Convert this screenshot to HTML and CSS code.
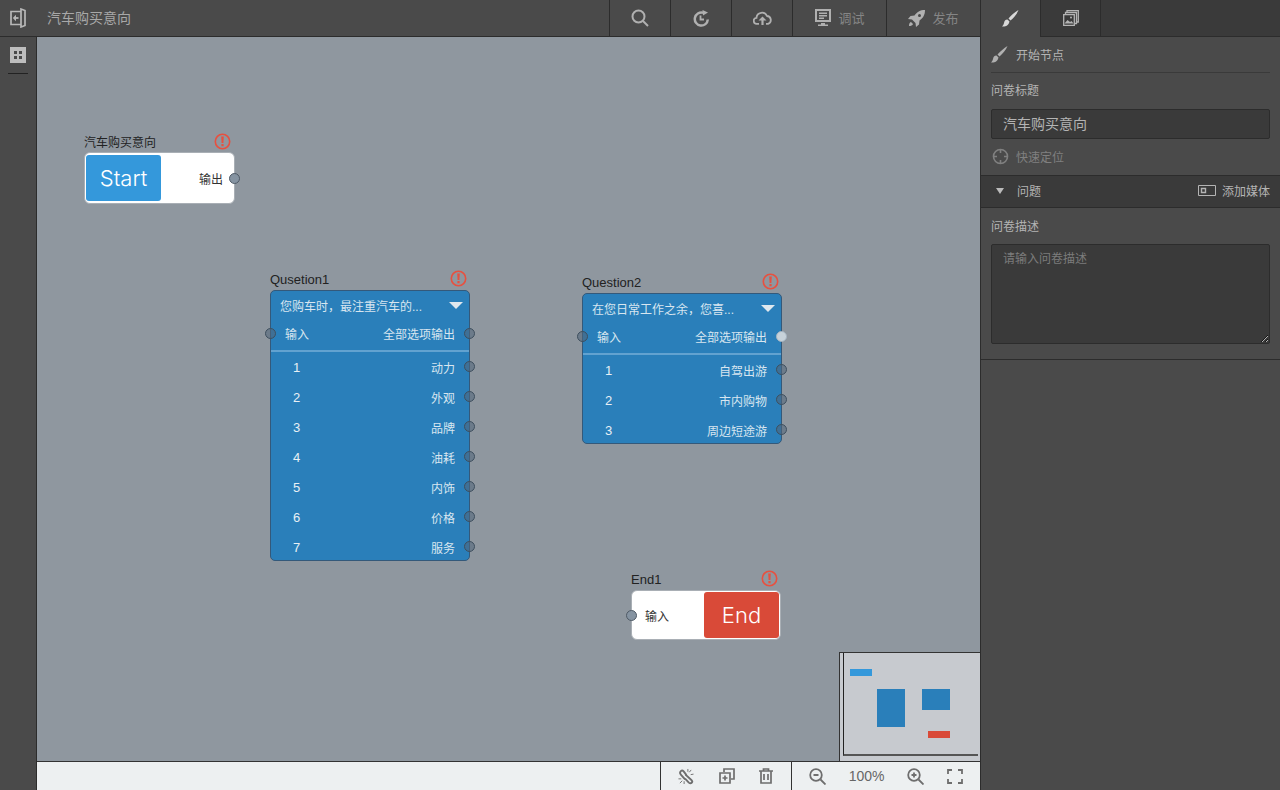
FILE: index.html
```html
<!DOCTYPE html>
<html lang="zh">
<head>
    <meta charset="UTF-8">
    <title>汽车购买意向</title>
    <link rel="stylesheet" href="styles.css">
</head>
<body>
<div class="app">
    <div class="main">
        <header class="topbar">
            <div class="back-btn">
                <svg width="16" height="20" viewBox="0 0 16 20" fill="none" stroke="#b8b8b8" stroke-width="1.700">
                    <path d="M11 3.500H1V16.500H11"/>
                    <path d="M11 1l4 1.500v15L11 19z" fill="#4a4a4a"/>
                    <path d="M8.500 10H4.500" stroke-width="1.800"/>
                    <path d="M6 6.800L2.800 10 6 13.200z" fill="#b8b8b8" stroke="none"/>
                </svg>
            </div>
            <div class="doc-title">汽车购买意向</div>
            <div class="tool">
                <svg width="18" height="18" viewBox="0 0 18 18" fill="none" stroke="#b0b0b0" stroke-width="2"><circle cx="7.500" cy="7.500" r="6"/><path d="M12 12l5 5"/></svg>
            </div>
            <div class="tool">
                <svg width="18" height="18" viewBox="0 0 18 18" fill="none" stroke="#b0b0b0" stroke-width="2.500"><path d="M15.800 10.500A6.500 6.500 0 1 1 11 3.800"/><path d="M8.500 6.500v4h3.500" stroke-width="1.800"/><path d="M10.500 1l5.500 2.500-5 3z" fill="#b0b0b0" stroke="none"/></svg>
            </div>
            <div class="tool">
                <svg width="19" height="14" viewBox="0 0 19 14" fill="none" stroke="#b0b0b0" stroke-width="1.800"><path d="M6 12.800H4a3 3 0 0 1-.5-6 5.500 5.500 0 0 1 10.500-1.800 4 4 0 0 1 1 7.800H13"/><path d="M9.500 14V9" stroke-width="2.200"/><path d="M9.500 5.500l4 4h-8z" fill="#b0b0b0" stroke="none"/></svg>
            </div>
            <div class="tool tool-wide tool-debug">
                <svg width="17" height="18" viewBox="-1 0 17 18"><path fill="#b0b0b0" fill-rule="evenodd" d="M0 0h16v13H0zM2 2v9h12V2zM4 3.500h8V5H4zM4 6h8v1.500H4zM4 8.500h5V10H4zM6 14h4v1.500h3V17H3v-1.500h3z"/></svg>
                <span>调试</span>
            </div>
            <div class="tool tool-wide tool-publish">
                <svg width="17" height="17" viewBox="0 0 17 17"><path fill="#b0b0b0" d="M17 0c-5 0-8 2-10.500 5.500L2.500 6 0 9l4 .5L7.500 13l.5 4 3-2.500.5-4C15 8 17 5 17 0zM11.500 4a1.500 1.500 0 1 1 0 3 1.500 1.500 0 0 1 0-3zM3 12c-1.500 .5-2 2-2 4 2 0 3.500-.5 4-2z"/></svg>
                <span>发布</span>
            </div>
        </header>

        <div class="work">
            <aside class="sidebar">
                <div class="grid-icon"><i></i><i></i><i></i><i></i></div>
                <div class="sidebar-line"></div>
            </aside>

            <div class="center">
                <div class="canvas">
                    <div class="node-wrap start-wrap">
                        <div class="node-head">
                            <span>汽车购买意向</span>
                            <svg class="warn" width="17" height="17" viewBox="0 0 17 17"><circle cx="8.500" cy="8.500" r="7.200" fill="none" stroke="#e8503f" stroke-width="1.600"/><path d="M7.200 3.500h2.600l-.4 6.500H7.600zM7.400 11h2.200v2.200H7.400z" fill="#e8503f"/></svg>
                        </div>
                        <div class="term-node start-node">
                            <div class="term-block start-block">Start</div>
                            <div class="term-label term-label-out">输出</div>
                            <span class="port port-right"></span>
                        </div>
                    </div>

                    <div class="node-wrap q1-wrap">
                        <div class="node-head">
                            <span>Qusetion1</span>
                            <svg class="warn" width="17" height="17" viewBox="0 0 17 17"><circle cx="8.500" cy="8.500" r="7.200" fill="none" stroke="#e8503f" stroke-width="1.600"/><path d="M7.200 3.500h2.600l-.4 6.500H7.600zM7.400 11h2.200v2.200H7.400z" fill="#e8503f"/></svg>
                        </div>
                        <div class="q-node">
                            <div class="q-title"><span>您购车时，最注重汽车的...</span><b class="caret"></b></div>
                            <div class="q-io">
                                <span class="port port-left"></span>
                                <span>输入</span><span>全部选项输出</span>
                                <span class="port port-right"></span>
                            </div>
                            <div class="q-row"><span class="num">1</span><span>动力</span><span class="port port-right"></span></div>
                            <div class="q-row"><span class="num">2</span><span>外观</span><span class="port port-right"></span></div>
                            <div class="q-row"><span class="num">3</span><span>品牌</span><span class="port port-right"></span></div>
                            <div class="q-row"><span class="num">4</span><span>油耗</span><span class="port port-right"></span></div>
                            <div class="q-row"><span class="num">5</span><span>内饰</span><span class="port port-right"></span></div>
                            <div class="q-row"><span class="num">6</span><span>价格</span><span class="port port-right"></span></div>
                            <div class="q-row"><span class="num">7</span><span>服务</span><span class="port port-right"></span></div>
                        </div>
                    </div>

                    <div class="node-wrap q2-wrap">
                        <div class="node-head">
                            <span>Question2</span>
                            <svg class="warn" width="17" height="17" viewBox="0 0 17 17"><circle cx="8.500" cy="8.500" r="7.200" fill="none" stroke="#e8503f" stroke-width="1.600"/><path d="M7.200 3.500h2.600l-.4 6.500H7.600zM7.400 11h2.200v2.200H7.400z" fill="#e8503f"/></svg>
                        </div>
                        <div class="q-node">
                            <div class="q-title"><span>在您日常工作之余，您喜...</span><b class="caret"></b></div>
                            <div class="q-io">
                                <span class="port port-left"></span>
                                <span>输入</span><span>全部选项输出</span>
                                <span class="port port-right port-on"></span>
                            </div>
                            <div class="q-row"><span class="num">1</span><span>自驾出游</span><span class="port port-right"></span></div>
                            <div class="q-row"><span class="num">2</span><span>市内购物</span><span class="port port-right"></span></div>
                            <div class="q-row"><span class="num">3</span><span>周边短途游</span><span class="port port-right"></span></div>
                        </div>
                    </div>

                    <div class="node-wrap end-wrap">
                        <div class="node-head">
                            <span>End1</span>
                            <svg class="warn" width="17" height="17" viewBox="0 0 17 17"><circle cx="8.500" cy="8.500" r="7.200" fill="none" stroke="#e8503f" stroke-width="1.600"/><path d="M7.200 3.500h2.600l-.4 6.500H7.600zM7.400 11h2.200v2.200H7.400z" fill="#e8503f"/></svg>
                        </div>
                        <div class="term-node end-node">
                            <span class="port port-left"></span>
                            <div class="term-label term-label-in">输入</div>
                            <div class="term-block end-block">End</div>
                        </div>
                    </div>

                    <div class="minimap">
                        <div class="minimap-inner">
                            <i class="mm mm-start"></i>
                            <i class="mm mm-q1"></i>
                            <i class="mm mm-q2"></i>
                            <i class="mm mm-end"></i>
                        </div>
                    </div>
                </div>

                <footer class="bottombar">
                    <div class="bottom-group edit-group">
                        <svg width="16" height="17" viewBox="0 0 17 17" fill="none" stroke="#6e6e6e" stroke-width="2" stroke-linejoin="round"><path d="M9 7L6 3Q4.500 1.500 3 2.800T2.800 6.200L7.500 11.500"/><path d="M8 6.500L14.500 12.500Q15.800 14 14.500 15.200T11.500 15L7.500 10.800"/><path d="M10.500 0.500v3M14 1.500l-2 2.500M16.500 6l-3 .5M0.500 11h3M2 15.500l2.500-2.500M6.500 13.500v3" stroke-width="1"/></svg>
                        <svg width="16" height="16" viewBox="0 0 16 16" fill="none" stroke="#6e6e6e" stroke-width="1.700"><path d="M5 4V1h10v10h-3"/><path d="M1 5h10v10H1zM6 7.500v5M3.500 10h5"/></svg>
                        <svg width="14" height="16" viewBox="0 0 14 16" fill="none" stroke="#6e6e6e" stroke-width="1.700"><path d="M0 3h14M4.500 3V1h5v2M2 3v12h10V3M5 6v6M9 6v6"/></svg>
                    </div>
                    <div class="bottom-group zoom-group">
                        <svg width="17" height="17" viewBox="0 0 17 17" fill="none" stroke="#6e6e6e" stroke-width="1.800"><circle cx="7" cy="7" r="5.800"/><path d="M11.500 11.500l5 5M4.500 7h5"/></svg>
                        <span class="zoom-val">100%</span>
                        <svg width="17" height="17" viewBox="0 0 17 17" fill="none" stroke="#6e6e6e" stroke-width="1.800"><circle cx="7" cy="7" r="5.800"/><path d="M11.500 11.500l5 5M4.500 7h5M7 4.500v5"/></svg>
                        <svg width="16" height="15" viewBox="0 0 16 15" fill="none" stroke="#6e6e6e" stroke-width="1.800"><path d="M1 5V1h4M11 1h4v4M15 10v4h-4M5 14H1v-4"/></svg>
                    </div>
                </footer>
            </div>
        </div>
    </div>

    <aside class="panel">
        <div class="tabs">
            <div class="tab tab-active">
                <svg width="17" height="17" viewBox="0 0 17 17"><path fill="#d8d8d8" d="M16.500 0C13 2 9 5.500 6.500 8.500l2 2C11.500 8 15 4 16.500 0zM5.500 9.500C3 9.500 2.500 11 2 13c-.3 1.500-1 2.500-2 3.500 3 .5 6.500-.5 7.500-5z"/></svg>
            </div>
            <div class="tab">
                <svg width="16" height="16" viewBox="0 0 16 16" fill="none" stroke="#b4b4b4" stroke-width="1.300"><path d="M4 3V.7h11.300V12H13"/><path d="M2.500 4.500V2.500H13.500V13.500H11.500"/><path d="M.7 4.700h10.600v10.600H.7z" fill="#3a3a3a"/><path d="M1.500 13.500l3-3.500 2.500 2 1.500-1 2 2.500z" fill="#b4b4b4" stroke="none"/><circle cx="8" cy="7.500" r="1" fill="#b4b4b4" stroke="none"/></svg>
            </div>
        </div>

        <div class="panel-body">
            <div class="panel-head">
                <svg width="17" height="17" viewBox="0 0 17 17"><path fill="#b0b0b0" d="M16.500 0C13 2 9 5.500 6.500 8.500l2 2C11.500 8 15 4 16.500 0zM5.500 9.500C3 9.500 2.500 11 2 13c-.3 1.500-1 2.500-2 3.500 3 .5 6.500-.5 7.500-5z"/></svg>
                <span>开始节点</span>
            </div>
            <label class="field-label label-title">问卷标题</label>
            <input class="text-input" type="text" value="汽车购买意向">
            <div class="locate">
                <svg width="17" height="17" viewBox="0 0 17 17" fill="none" stroke="#808080" stroke-width="1.600"><circle cx="8.500" cy="8.500" r="7"/><path d="M8.500 1v4M8.500 12v4M1 8.500h4M12 8.500h4"/></svg>
                <span>快速定位</span>
            </div>
        </div>

        <div class="section-bar">
            <b class="section-caret"></b>
            <span class="section-name">问题</span>
            <svg width="18" height="11" viewBox="0 0 18 11" fill="none" stroke="#b4b4b4"><path d="M.5 .5h17v10H.5z"/><path d="M3.500 3.500h4v4h-4z" stroke-width="1.400"/></svg>
            <span class="add-media">添加媒体</span>
        </div>

        <div class="panel-desc">
            <label class="field-label">问卷描述</label>
            <textarea class="text-area" placeholder="请输入问卷描述"></textarea>
        </div>
    </aside>
</div>
</body>
</html>
```

FILE: styles.css
```css
* {
    box-sizing: border-box;
}

html, body {
    margin: 0;
    padding: 0;
    height: 100%;
    overflow: hidden;
}

body {
    font-family: "Liberation Sans", "Noto Sans CJK SC", sans-serif;
    font-size: 12px;
    background-color: #4a4a4a;
    color: #b4b4b4;
}

.app {
    display: flex;
    height: 790px;
}

.main {
    flex: 1;
    display: flex;
    flex-direction: column;
    min-width: 0;
}

/* top toolbar */
.topbar {
    height: 37px;
    display: flex;
    align-items: stretch;
    background-color: #4a4a4a;
    border-bottom: 1px solid #2c2c2c;
}

.back-btn {
    width: 37px;
    display: flex;
    align-items: center;
    padding-left: 10px;
}

.doc-title {
    flex: 1;
    padding-left: 10px;
    font-size: 14px;
    line-height: 36px;
    color: #a8a8a8;
}

.tool {
    width: 61px;
    display: flex;
    align-items: center;
    justify-content: center;
    gap: 7px;
    border-left: 1px solid #2c2c2c;
    font-size: 13px;
    color: #858585;
}

.tool span {
    margin-bottom: 2px;
}

.tool-debug {
    width: 94px;
}

.tool-publish {
    width: 94px;
}

/* left strip */
.work {
    flex: 1;
    display: flex;
    min-height: 0;
}

.sidebar {
    width: 37px;
    padding-top: 10px;
    display: flex;
    flex-direction: column;
    align-items: center;
    border-right: 1px solid #2c2c2c;
    background-color: #4a4a4a;
}

.grid-icon {
    width: 16px;
    height: 16px;
    padding: 4px;
    display: grid;
    grid-template-columns: 1fr 1fr;
    gap: 2px;
    background-color: #bdbdbd;
}

.grid-icon i {
    background-color: #4a4a4a;
}

.sidebar-line {
    width: 20px;
    height: 1px;
    margin-top: 10px;
    background-color: #222;
}

.center {
    flex: 1;
    display: flex;
    flex-direction: column;
    min-width: 0;
}

/* canvas and nodes */
.canvas {
    position: relative;
    flex: 1;
    background-color: #8f979f;
    overflow: hidden;
}

.node-wrap {
    position: absolute;
    color: #222;
}

.start-wrap {
    left: 47px;
    top: 95px;
    width: 151px;
}

.q1-wrap {
    left: 233px;
    top: 233px;
    width: 200px;
}

.q2-wrap {
    left: 545px;
    top: 236px;
    width: 200px;
}

.end-wrap {
    left: 594px;
    top: 533px;
    width: 150px;
}

.node-head {
    height: 20px;
    padding-right: 3px;
    display: flex;
    justify-content: space-between;
    align-items: center;
    font-size: 13px;
    line-height: 20px;
}

.start-wrap .node-head {
    padding-right: 4px;
}

.start-wrap .node-head span {
    margin-top: 2px;
    font-size: 12px;
}

.warn {
    margin-top: -3px;
}

.start-wrap .warn {
    margin-top: -1px;
}

.term-node {
    position: relative;
    display: flex;
    align-items: stretch;
    justify-content: space-between;
    background-color: #fff;
    border: 1px solid #a9afb5;
    border-radius: 6px;
}

.start-node {
    height: 52px;
    padding: 2px 1px;
}

.end-node {
    height: 50px;
    padding: 1px;
}

.term-block {
    width: 75px;
    display: flex;
    align-items: center;
    justify-content: center;
    border-radius: 3px;
    font-family: Inter, sans-serif;
    font-weight: 300;
    font-size: 22px;
    color: #fff;
}

.start-block {
    background-color: #3498db;
}

.end-block {
    background-color: #d94a38;
}

.term-label {
    align-self: center;
    color: #333;
}

.term-label-out {
    margin-right: 10px;
}

.term-label-in {
    margin-left: 12px;
}

.q-node {
    position: relative;
    background-color: #2a7fba;
    border: 1px solid #34597a;
    border-radius: 5px;
    color: #d8e6f0;
}

.q-title {
    height: 28px;
    padding: 0 6px 0 9px;
    display: flex;
    align-items: center;
    justify-content: space-between;
}

.caret {
    width: 0;
    height: 0;
    border-left: 7px solid transparent;
    border-right: 7px solid transparent;
    border-top: 7px solid #dfe8ee;
}

.q-io {
    position: relative;
    height: 33px;
    padding: 0 14px 2px 14px;
    display: flex;
    align-items: center;
    justify-content: space-between;
    border-bottom: 2px solid #62a2d0;
}

.q-row {
    position: relative;
    height: 30px;
    padding: 0 14px 0 22px;
    display: flex;
    align-items: center;
    justify-content: space-between;
}

.q-row:last-child {
    margin-bottom: -2px;
}

.num {
    font-size: 13px;
    color: #e8f0f5;
}

.port {
    position: absolute;
    top: 50%;
    width: 11px;
    height: 11px;
    margin-top: -6px;
    border: 1px solid #3e4f5e;
    border-radius: 50%;
    background-color: rgba(80, 100, 120, 0.55);
}

.q-io .port {
    margin-top: -7px;
}

.port-left {
    left: -6px;
}

.port-right {
    right: -6px;
}

.q-io .port-on {
    background-color: #c7d2da;
    border-color: #a5b5c2;
}

.term-node .port {
    margin-top: -5px;
    background-color: #8593a1;
    border-color: #4f5a66;
}

/* minimap */
.minimap {
    position: absolute;
    right: 0;
    bottom: 0;
    width: 141px;
    height: 109px;
    padding-left: 3px;
    background-color: #c7cacf;
    border-left: 1px solid #333;
    border-top: 1px solid #333;
}

.minimap-inner {
    position: relative;
    height: 103px;
    margin-right: 2px;
    border-left: 1px solid #222;
    border-bottom: 2px solid #555;
}

.mm {
    position: absolute;
}

.mm-start {
    left: 6px;
    top: 16px;
    width: 22px;
    height: 7px;
    background-color: #3498db;
}

.mm-q1 {
    left: 33px;
    top: 36px;
    width: 28px;
    height: 38px;
    background-color: #2a7fba;
}

.mm-q2 {
    left: 78px;
    top: 36px;
    width: 28px;
    height: 21px;
    background-color: #2a7fba;
}

.mm-end {
    left: 84px;
    top: 78px;
    width: 22px;
    height: 7px;
    background-color: #d94a38;
}

/* bottom bar */
.bottombar {
    height: 29px;
    display: flex;
    justify-content: flex-end;
    background-color: #edf0f1;
    border-top: 1px solid #333;
}

.bottom-group {
    display: flex;
    align-items: center;
    border-left: 1px solid #333;
    color: #666;
}

.edit-group {
    width: 131px;
    padding: 0 18px 0 17px;
    justify-content: space-between;
}

.zoom-group {
    width: 189px;
    padding: 0 17px;
    justify-content: space-between;
}

.zoom-val {
    font-size: 14px;
}

/* right panel */
.panel {
    width: 300px;
    display: flex;
    flex-direction: column;
    background-color: #4a4a4a;
    border-left: 1px solid #2c2c2c;
}

.tabs {
    height: 37px;
    display: flex;
    background-color: #3a3a3a;
    border-bottom: 1px solid #2c2c2c;
}

.tab {
    width: 60px;
    display: flex;
    align-items: center;
    justify-content: center;
    border-right: 1px solid #2c2c2c;
}

.tab-active {
    margin-bottom: -1px;
    background-color: #4a4a4a;
}

.panel-body {
    padding: 0 10px;
}

.panel-head {
    height: 36px;
    display: flex;
    align-items: center;
    gap: 8px;
    border-bottom: 1px solid #3a3a3a;
}

.field-label {
    display: block;
    line-height: 18px;
    color: #b4b4b4;
}

.label-title {
    margin-top: 9px;
}

.text-input {
    display: block;
    width: 100%;
    height: 30px;
    margin-top: 9px;
    padding: 0 11px 2px;
    font: inherit;
    font-size: 14px;
    color: #b4b4b4;
    background-color: #3a3a3a;
    border: 1px solid #2c2c2c;
    border-radius: 2px;
    outline: none;
}

.locate {
    height: 36px;
    padding: 0 0 2px 1px;
    display: flex;
    align-items: center;
    gap: 7px;
    color: #808080;
}

.section-bar {
    height: 33px;
    padding: 0 10px 2px 15px;
    display: flex;
    align-items: center;
    background-color: #3a3a3a;
    border-top: 1px solid #2c2c2c;
    border-bottom: 1px solid #2c2c2c;
}

.section-caret {
    width: 0;
    height: 0;
    border-left: 4px solid transparent;
    border-right: 4px solid transparent;
    border-top: 6px solid #bbb;
}

.section-name {
    flex: 1;
    margin-left: 13px;
}

.add-media {
    margin-left: 6px;
}

.panel-desc {
    padding: 10px 10px 15px;
    border-bottom: 1px solid #2c2c2c;
}

.text-area {
    display: block;
    width: 100%;
    height: 100px;
    margin-top: 8px;
    padding: 4px 11px;
    font: inherit;
    color: #b4b4b4;
    background-color: #3a3a3a;
    border: 1px solid #2c2c2c;
    border-radius: 2px;
    outline: none;
}

.text-area::placeholder {
    color: #7c7c7c;
}
```
